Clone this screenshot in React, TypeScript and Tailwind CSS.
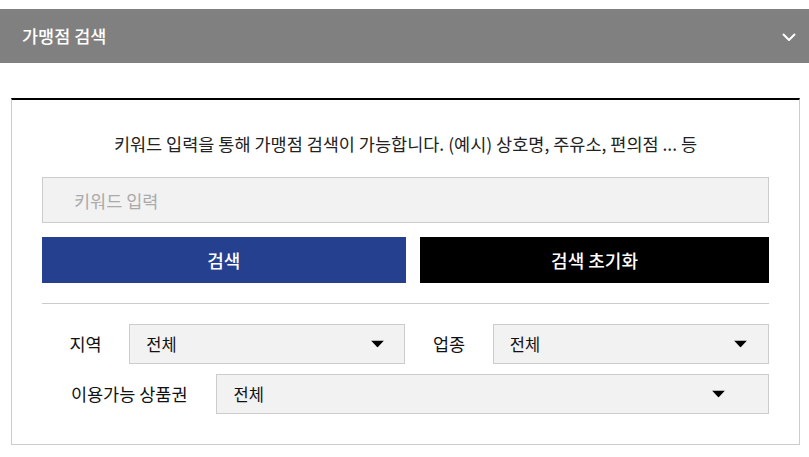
import React from "react";

const FONT = "font-['Noto_Sans_CJK_KR','Noto_Sans',sans-serif]";

function Arrow() {
  return (
    <svg
      className="absolute left-[calc((100%-13px)*0.92)] top-1/2 -translate-y-1/2"
      width="13"
      height="7"
      viewBox="0 0 13 7"
    >
      <polygon points="0,0 13,0 6.5,7" fill="#000" />
    </svg>
  );
}

function Select({ className }: { className: string }) {
  return (
    <div
      className={`relative h-full border border-[#ccc] bg-[#f2f2f2] pl-4 flex items-center text-[16.5px] text-[#111] ${className}`}
    >
      <span>전체</span>
      <Arrow />
    </div>
  );
}

export default function App() {
  return (
    <div className={`w-[809px] h-[457px] bg-white ${FONT} overflow-hidden`}>
      <div className="mt-[9px] h-[54px] bg-[#808080] flex items-center justify-between pl-[22px] pr-[13px]">
        <span className="text-white text-[17.5px] font-medium">가맹점 검색</span>
        <svg width="14" height="8" viewBox="0 0 14 8" className="mt-[1px]">
          <polyline
            points="1,1 7,7 13,1"
            fill="none"
            stroke="#fff"
            strokeWidth="2"
          />
        </svg>
      </div>

      <div className="mt-[35px] ml-[11px] w-[789px] border-t-2 border-t-black border-x border-b border-x-[#ccc] border-b-[#ccc] px-[30px] pt-[32px] pb-[30px]">
        <p className="text-center text-[17.5px] leading-[24px] text-[#222] whitespace-nowrap">
          키워드 입력을 통해 가맹점 검색이 가능합니다. (예시) 상호명, 주유소, 편의점 ... 등
        </p>

        <input
          type="text"
          placeholder="키워드 입력"
          className="mt-[21px] block w-full h-[46px] border border-[#ccc] bg-[#f2f2f2] px-[31px] text-[17.5px] text-[#111] placeholder:text-[#aaa] outline-none"
        />

        <div className="mt-[14px] flex justify-between h-[46px]">
          <button className="w-1/2 h-full bg-[#24408e] text-white text-[18px] font-medium">
            검색
          </button>
          <button className="w-[48%] h-full bg-black text-white text-[18px] font-medium">
            검색 초기화
          </button>
        </div>

        <div className="mt-[20px] border-t border-[#ccc]" />

        <div className="mt-[20px] flex h-[40px] items-center">
          <div className="w-[12%] text-center text-[17.5px] text-[#111]">지역</div>
          <Select className="w-[38%]" />
          <div className="w-[12%] text-center text-[17.5px] text-[#111]">업종</div>
          <Select className="w-[38%]" />
        </div>

        <div className="mt-[10px] flex h-[40px] items-center">
          <div className="w-[24%] text-center text-[17.5px] text-[#111]">이용가능 상품권</div>
          <Select className="w-[76%]" />
        </div>
      </div>
    </div>
  );
}
